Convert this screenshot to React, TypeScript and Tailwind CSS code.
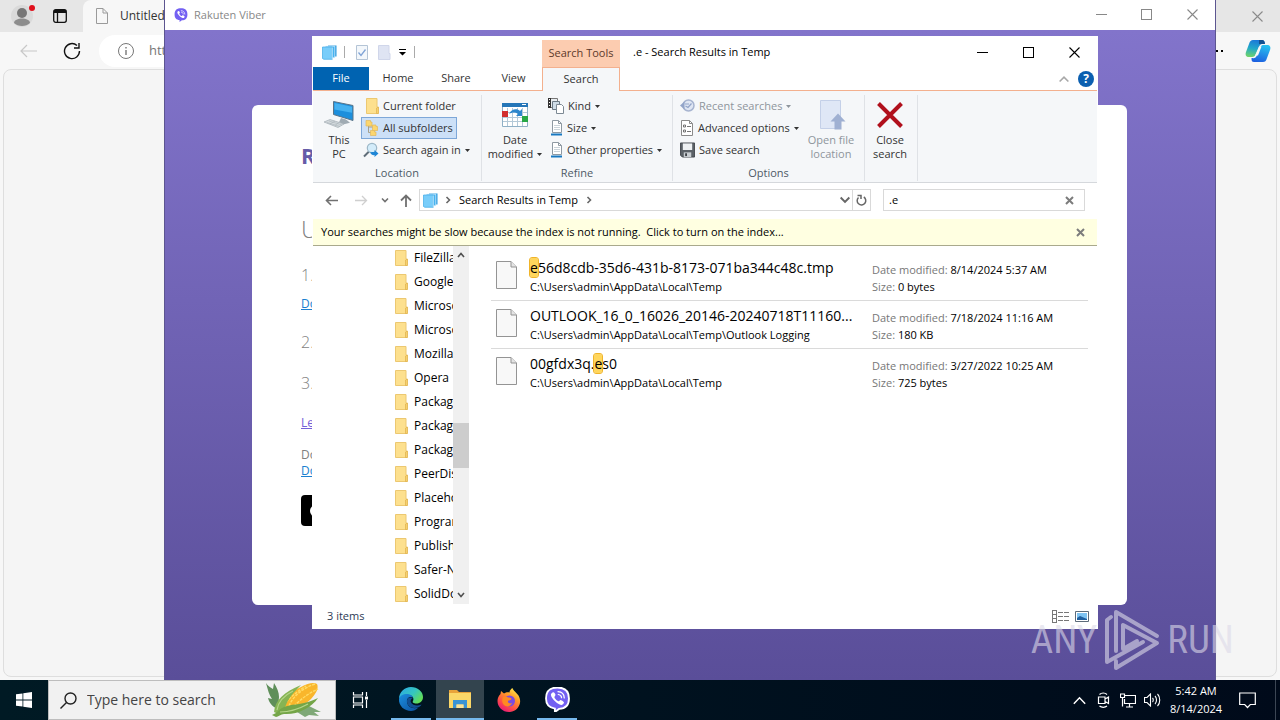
import type { ReactNode } from "react";

const FOLDERS = [
  "FileZilla",
  "Google",
  "Microsoft",
  "Microsoft",
  "Mozilla",
  "Opera",
  "Packages",
  "Packages",
  "Packages",
  "PeerDist",
  "Placeholder",
  "Programs",
  "Publishers",
  "Safer-Net",
  "SolidDocs",
];

const FILES = [
  {
    name: ["", "e", "56d8cdb-35d6-431b-8173-071ba344c48c.tmp"],
    path: "C:\\Users\\admin\\AppData\\Local\\Temp",
    modified: "8/14/2024 5:37 AM",
    size: "0 bytes",
  },
  {
    name: ["OUTLOOK_16_0_16026_20146-20240718T11160...", "", ""],
    path: "C:\\Users\\admin\\AppData\\Local\\Temp\\Outlook Logging",
    modified: "7/18/2024 11:16 AM",
    size: "180 KB",
  },
  {
    name: ["00gfdx3q.", "e", "s0"],
    path: "C:\\Users\\admin\\AppData\\Local\\Temp",
    modified: "3/27/2022 10:25 AM",
    size: "725 bytes",
  },
];

/* ---------- icons ---------- */

function Minimize() {
  return (
    <svg width="11" height="11" viewBox="0 0 11 11" stroke="currentColor" shapeRendering="crispEdges">
      <path d="M0 5.5h11" />
    </svg>
  );
}

function Maximize() {
  return (
    <svg width="11" height="11" viewBox="0 0 11 11" fill="none" stroke="currentColor" shapeRendering="crispEdges">
      <rect x="0.5" y="0.5" width="10" height="10" />
    </svg>
  );
}

function Close() {
  return (
    <svg width="11" height="11" viewBox="0 0 11 11" stroke="currentColor" strokeWidth="1.1">
      <path d="M0.5 0.5l10 10M10.5 0.5l-10 10" />
    </svg>
  );
}

function BoldClose() {
  return (
    <svg width="9" height="9" viewBox="0 0 9 9" stroke="#7c7c7c" strokeWidth="2">
      <path d="M1 1l7 7M8 1l-7 7" />
    </svg>
  );
}

function Chevron({ d, size = 8, width = 1.6 }: { d: string; size?: number; width?: number }) {
  return (
    <svg width={size} height={size} viewBox="0 0 8 8" fill="none" stroke="currentColor" strokeWidth={width}>
      <path d={d} />
    </svg>
  );
}

function Caret() {
  return (
    <svg className="inline-block shrink-0" width="5" height="3" viewBox="0 0 5 3" fill="currentColor">
      <path d="M0 0h5L2.500 3z" />
    </svg>
  );
}

function FolderIcon() {
  return (
    <svg className="shrink-0" width="13" height="16" viewBox="0 0 13 16">
      <path d="M0.500 0.500h10.500v8.500h1v6.500H0.500z" fill="#fde08e" stroke="#ecc871" />
      <path d="M10.500 10l2-1v6.500h-2z" fill="#f6d070" stroke="#dfb14c" strokeWidth="0.700" />
    </svg>
  );
}

function StackIcon() {
  return (
    <svg className="shrink-0" width="15" height="15" viewBox="0 0 15 15">
      <path d="M6 0.500h8.500v11H13L6 12z" fill="#2a9be0" />
      <path d="M3.500 1.200h9.300v11.600H3.500z" fill="#46b4f0" stroke="#e6f6ff" strokeWidth="0.700" />
      <path d="M0.500 2h9.800v12.300H1.800L0.500 13.500z" fill="#78cdfa" stroke="#3fa9e6" strokeWidth="0.700" />
      <path d="M10.300 2.500v11.500" stroke="#e6f6ff" strokeWidth="0.700" />
    </svg>
  );
}

function ThisPcIcon() {
  return (
    <svg width="32" height="30" viewBox="0 0 32 30">
      <path d="M10.500 1.500l19.500 4v15l-19.500-6z" fill="#1d8fdc" stroke="#5a7488" />
      <path d="M11.500 3l17.500 3.800v6L11.500 9.500z" fill="#45b1f0" />
      <path d="M18 18l5 1.500 4 3.200-6 1.500-5-2z" fill="#a0abb3" />
      <path d="M1 22l6-2.500 14 4.500-6 3.500z" fill="#d3d9dd" stroke="#a2acb3" strokeWidth="0.700" />
      <path d="M4 22.500l13 4M6 21l13 4M7 24l5-3M12 25.500l4-3" stroke="#a2acb3" strokeWidth="0.500" />
    </svg>
  );
}

function SubfoldersIcon() {
  return (
    <svg className="shrink-0" width="14" height="16" viewBox="0 0 14 16">
      <path d="M3.500 5v7.500h3M4 7h4" stroke="#a5a08c" fill="none" />
      <path d="M1 0.500h4.500v1.500H7v4H1z" fill="#fbd66f" stroke="#e3b95a" strokeWidth="0.700" />
      <path d="M7.500 5h3.500v1.500h1.500v4h-5z" fill="#fbd66f" stroke="#e3b95a" strokeWidth="0.700" />
      <path d="M5.500 10.500h4V12H11v3.500H5.500z" fill="#fbd66f" stroke="#e3b95a" strokeWidth="0.700" />
    </svg>
  );
}

function SearchAgainIcon() {
  return (
    <svg className="shrink-0" width="16" height="16" viewBox="0 0 16 16">
      <path d="M1 14.500l5-5" stroke="#5f6d78" strokeWidth="2" />
      <circle cx="9" cy="6" r="4.700" fill="#d3ecfa" stroke="#9db8c8" strokeWidth="1.200" />
      <path d="M7 10.500c1 2 3 3 4.500 2.500v2l4-3.500-4-3.500v2c-1.500 0-3 0-4.500.500z" fill="#1e86d6" />
    </svg>
  );
}

function CalendarIcon() {
  return (
    <svg width="26" height="26" viewBox="0 0 26 26">
      <path d="M0.500 1.500h25v23h-25z" fill="#fff" stroke="#8fb0c6" />
      <path d="M0 1h26v4H0z" fill="#2576b8" />
      <path d="M20 2.500h4" stroke="#fff" />
      <path d="M5.500 6v18M10.500 6v18M15.500 6v18M20.500 6v18M1 10.500h24M1 15.500h24M1 19.500h24" stroke="#b4c9d8" />
      <path d="M0 9h6v6H0z" fill="#d12f2f" />
      <path d="M20 14h6v6h-6z" fill="#28a745" />
      <path d="M7 12c2-5 8-6 11-3l2-2v7h-6l2-2c-2-2-6-2-9 0z" fill="#2d86cc" />
    </svg>
  );
}

function KindIcon() {
  return (
    <svg className="shrink-0" width="16" height="16" viewBox="0 0 16 16">
      <path d="M0.500 0.500h9v9h-9z" fill="#e9eef2" stroke="#777" />
      <path d="M0 0h3v10H0z" fill="#333" />
      <path d="M1 1.500h1M1 4.500h1M1 7.500h1" stroke="#fff" />
      <path d="M4.500 3.500h7v8h-7z" fill="#cfdde8" stroke="#6b7a86" />
      <path d="M8.500 6.500h5l2 2v7h-7z" fill="#fff" stroke="#7c8994" />
    </svg>
  );
}

function SizeIcon() {
  return (
    <svg className="shrink-0" width="12" height="16" viewBox="0 0 12 16">
      <path d="M1.500 0.500h6l3 3v9h-9z" fill="#fff" stroke="#8e99a2" />
      <path d="M7.500 0.500v3h3" fill="none" stroke="#8e99a2" />
      <path d="M3 5.500h6M3 7.500h6M3 9.500h6" stroke="#cbd4da" />
      <path d="M0 14.500h11" stroke="#1878c0" strokeWidth="2" />
    </svg>
  );
}

function RecentIcon() {
  return (
    <svg className="shrink-0" width="15" height="16" viewBox="0 0 15 16">
      <circle cx="8.500" cy="7.500" r="5.500" fill="#dfe6f3" stroke="#a7b4d0" strokeWidth="1.500" />
      <path d="M0 7.500l4.500-4v8z" fill="#93a5c9" />
      <path d="M5.500 8L8 9.500l3.500-4M5 6h4" fill="none" stroke="#93a5c9" strokeWidth="1.200" />
    </svg>
  );
}

function AdvancedIcon() {
  return (
    <svg className="shrink-0" width="14" height="16" viewBox="0 0 14 16">
      <path d="M1.500 0.500h8l3 3v12h-11z" fill="#fff" stroke="#8a8a8a" />
      <path d="M9.500 0.500v3h3" fill="none" stroke="#8a8a8a" />
      <path d="M3.500 5h2v2h-2zM3.500 10h2v2h-2z" fill="none" stroke="#555" strokeWidth="0.800" />
      <path d="M7 6.500h4M7 11.500h4" stroke="#777" />
    </svg>
  );
}

function FloppyIcon() {
  return (
    <svg className="shrink-0" width="15" height="16" viewBox="0 0 16 16">
      <path d="M0.500 0.500h15v15h-13l-2-2z" fill="#5b6167" stroke="#43484d" />
      <path d="M3 1h10v7H3z" fill="#eef1f3" />
      <path d="M4 10.500h8v5H4z" fill="#c8cdd1" />
      <path d="M5.500 11.500h2v3h-2z" fill="#3b4045" />
    </svg>
  );
}

function OpenLocationIcon() {
  return (
    <svg className="ml-1" width="26" height="30" viewBox="0 0 26 30">
      <path d="M0.500 0.500h20v28h-20z" fill="#dfe7f6" stroke="#c4d0e8" />
      <path d="M18 13.500l7.500 8h-4v8h-7v-8h-4z" fill="#9fb0d2" />
    </svg>
  );
}

function FileIcon() {
  return (
    <svg className="mt-2 shrink-0" width="21" height="28" viewBox="0 0 21 28">
      <path d="M0.500 0.500h14.500l5.500 5.500v21.500h-20z" fill="#f8f8f8" stroke="#949494" />
      <path d="M15 0.500v5.500h5.500" fill="#e4e4e4" stroke="#949494" />
    </svg>
  );
}

function ViberGlyph({ size, ring }: { size: number; ring?: boolean }) {
  return (
    <svg width={size} height={size} viewBox="0 0 24 24">
      <path
        d="M12 0.500c6.500 0 11 2.500 11 10.500 0 7-3.500 9.800-9.500 10L9.500 24v-3.300C4 19.800 1 17.500 1 11 1 3 5.500.500 12 .500z"
        fill="#7360f2"
        stroke={ring ? "#fff" : "none"}
        strokeWidth="1.800"
      />
      <path
        d="M7 5.500c1-.700 1.700-.300 2.300.600.800 1.100 1.100 1.700.300 2.500-1 1-.500 1.700.500 3 1 1.400 2.400 2.400 3.300 2.100.700-.300.800-1.400 2-1.100 1 .300 2.300 1.200 2.700 1.900.500 1-1 2.800-2.100 2.800-3.100 0-9.700-5.600-10.300-9.600-.100-1 .400-1.700 1.300-2.200z"
        fill="#fff"
      />
      <path d="M12.500 4.500c3.500.200 5.800 2.500 6 6M12.800 7.200c1.800.200 3 1.300 3.100 3.100" fill="none" stroke="#fff" strokeWidth="1.200" strokeLinecap="round" />
    </svg>
  );
}

function EdgeIcon() {
  return (
    <svg width="26" height="26" viewBox="0 0 26 26">
      <defs>
        <linearGradient id="edge-top" x1="0" y1="0" x2="1" y2="0.600">
          <stop offset="0" stopColor="#2aa6e8" />
          <stop offset="0.600" stopColor="#35c6c0" />
          <stop offset="1" stopColor="#62dd57" />
        </linearGradient>
        <linearGradient id="edge-low" x1="0" y1="0" x2="1" y2="1">
          <stop offset="0" stopColor="#1b8fe0" />
          <stop offset="1" stopColor="#0c4f9e" />
        </linearGradient>
      </defs>
      <path d="M1 13C1 6 6.500 1 13 1s12 4.500 12 10c0 4-3 6.500-6.500 6.500-3 0-4.500-1-3.500-2.500 1.500-3-1-6-4.500-6C6 9 2 10.500 1 13z" fill="url(#edge-top)" />
      <path d="M1 13c1-4 5-5.500 9-5 2.500.300 4.500 2 5 3.500-4-1.500-6.500 1-6 4.500.700 5 5.500 7.500 11.500 5.500C18 24 15.500 25 13 25 6.500 25 .500 20 1 13z" fill="url(#edge-low)" />
      <path d="M9 16c.700 5 5.500 7.500 12 5 1-.500 2-1.500 2.500-2.500-4 2-9 1-10.500-2-1-2 .500-4 2-4.500-4-1.500-6.500.500-6 4z" fill="#124f93" />
    </svg>
  );
}

function ExplorerIcon() {
  return (
    <svg width="24" height="22" viewBox="0 0 24 22">
      <path d="M1 2h8l2 2h12v4H1z" fill="#e9a33a" />
      <path d="M1 5h22v15H1z" fill="#fbd768" />
      <path d="M5 12h14v8h-3.500v-3.500h-7V20H5z" fill="#3a94d6" />
      <path d="M8.500 16.500h7V20h-7z" fill="#fbe39a" />
    </svg>
  );
}

function FirefoxIcon() {
  return (
    <svg width="24" height="24" viewBox="0 0 24 24">
      <defs>
        <linearGradient id="fox" x1="0.800" y1="0" x2="0.200" y2="1">
          <stop offset="0" stopColor="#fff04f" />
          <stop offset="0.350" stopColor="#ff9a28" />
          <stop offset="0.700" stopColor="#ff4a4a" />
          <stop offset="1" stopColor="#e3127f" />
        </linearGradient>
      </defs>
      <path d="M3.500 6L4 3l3 2.500C9 4 11 4 12.500 4.500 12.500 2.500 14 1 15.500 0c.500 2.500 4 4.500 6 7.500C24 12 23.500 16 21 19.500 18.500 23 14.500 24 12 24 5.500 24 .500 19 .500 13c0-3 1-5 3-7z" fill="url(#fox)" />
      <circle cx="12.500" cy="13" r="5.500" fill="#7a4be0" />
      <path d="M6 9c2-1 4-.500 5 .500 2 0 3.500.500 3.500 1.500s-2 1-3.500 2c-.500 2 2 3 4 2-1 3-4 4-6.500 3C5 16.500 4.500 12 6 9z" fill="#ff8a22" />
    </svg>
  );
}

function CornIcon() {
  return (
    <svg className="ml-auto mr-3" width="58" height="36" viewBox="0 0 58 36">
      <path d="M1 1c2 3 4 4 7 6l1-6c3 5 5 9 5 14l-1 12C7 25 4 20 3 16l4 1C4 13 3 8 1 1z" fill="#5f8f5a" />
      <path d="M20 30l12-4 10-3 14 7-7 0 5 4-10-1-4 2-8-5z" fill="#7fa877" />
      <path d="M17 25C21 14 29 8 36 5 43 1 49 0 52 2c2 4-1 10-6 15-7 7-19 12-29 8z" fill="#f9b62b" />
      <path d="M24 24C28 14 38 6 50 2M29 24C36 17 44 11 53 7M21 20c6-6 12-11 20-16" stroke="#ffdc66" strokeWidth="1.400" strokeDasharray="3 1" fill="none" />
      <path d="M9 30C10 18 19 10 36 3c-8 8-13 14-15 20-1 3-4 6-8 9z" fill="#86b454" />
      <path d="M11 31c6-7 14-8 23-9 7-1 13-3 19-6-7 10-21 17-34 16-3 0-6 3-8 3l-4-2z" fill="#74a548" />
      <path d="M12 28c1-7 6-14 16-19M15 30c10 0 19-3 28-8" fill="none" stroke="#b5d58a" strokeWidth="1.200" />
    </svg>
  );
}

function CopilotIcon() {
  return (
    <svg width="26" height="24" viewBox="0 0 26 24">
      <defs>
        <linearGradient id="cp-a" x1="0.500" y1="0" x2="0.300" y2="1">
          <stop offset="0" stopColor="#1b78d8" />
          <stop offset="0.500" stopColor="#22a9c9" />
          <stop offset="1" stopColor="#6fd36b" />
        </linearGradient>
        <linearGradient id="cp-b" x1="0.600" y1="0" x2="0.300" y2="1">
          <stop offset="0" stopColor="#27c0ef" />
          <stop offset="1" stopColor="#1c5fe0" />
        </linearGradient>
      </defs>
      <path d="M8 1h9c2 0 2.500 1 3 4-3-.500-5 0-6 3l-3 7c-1 2-2 3-4 3H4c-3 0-4-2-3-5l3-8c1-3 2-4 4-4z" fill="url(#cp-a)" />
      <path d="M14 1h3c2 0 2.500 1 3 4h-6z" fill="#14518f" />
      <path d="M18 23H9c-2 0-2.500-1-2.500-4 3 .500 4.500 0 5.500-3l3-7c1-2.500 2-3 4-3h3c3 0 4 2 3 5l-3 8c-1 3-2 4-4 4z" fill="url(#cp-b)" />
      <path d="M14 7.500h2.500l-3.500 9h-3z" fill="#f7f7f7" />
    </svg>
  );
}

/* ---------- browser behind everything ---------- */

function BrowserWindow() {
  return (
    <section className="absolute inset-0 flex flex-col bg-[#f7f7f7]">
      <div className="flex h-8 items-stretch bg-[#e6e6e6]">
        <div className="flex w-[83px] items-center gap-5 pl-[11px]">
          <button aria-label="Profile" className="relative">
            <svg width="22" height="22" viewBox="0 0 22 22">
              <circle cx="11" cy="11" r="11" fill="#dadada" />
              <circle cx="11" cy="8" r="5" fill="#777" />
              <path d="M3 18c0-6 16-6 16 0-4 4-12 4-16 0z" fill="#8d8d8d" />
            </svg>
            <span className="absolute -right-0.5 top-0 size-[6px] rounded-full bg-[#e0101c]" />
          </button>
          <button aria-label="Tab actions">
            <svg width="14" height="14" viewBox="0 0 14 14" fill="none" stroke="#111" strokeWidth="1.300">
              <rect x="0.700" y="0.700" width="12.600" height="12.600" rx="2" />
              <path d="M1 2.500h12" strokeWidth="3" />
              <path d="M4.500 3v10" />
            </svg>
          </button>
        </div>
        <div className="flex w-60 items-center gap-3 rounded-t-lg bg-[#f7f7f7] pl-[13px] text-xs text-[#333]">
          <svg width="12" height="16" viewBox="0 0 12 16" fill="none" stroke="#9a9a9a">
            <path d="M0.500 0.500h6.500l4.500 4.500v10.500H0.500zM7 0.500v4.500h4.500" />
          </svg>
          <span>Untitled</span>
        </div>
        <button aria-label="Close browser" className="ml-auto flex w-[46px] items-center justify-center text-[#8a8a8a]">
          <Close />
        </button>
      </div>
      <div className="flex h-[37px] items-center">
        <button aria-label="Back" className="ml-5 text-[#c8c8c8]">
          <svg width="17" height="14" viewBox="0 0 17 14" fill="none" stroke="currentColor" strokeWidth="1.200">
            <path d="M17 7H1M7 1L1 7l6 6" />
          </svg>
        </button>
        <button aria-label="Refresh" className="ml-[26px]">
          <svg width="18" height="18" viewBox="0 0 18 18" fill="none" stroke="#111" strokeWidth="1.400">
            <path d="M16.500 9A7.500 7.500 0 1 1 14 3.500M16 1v5h-5" />
          </svg>
        </button>
        <div className="ml-[18px] flex h-8 w-[300px] items-center gap-[15px] rounded-full bg-white pl-[19px] text-[13px] text-[#777]">
          <svg width="16" height="16" viewBox="0 0 16 16" fill="none" stroke="#777">
            <circle cx="8" cy="8" r="7.500" />
            <path d="M8 7v5M8 4v1.500" strokeWidth="1.400" />
          </svg>
          <span>http</span>
        </div>
        <div className="ml-auto flex items-center gap-[22px] pr-[9px]">
          <span className="flex gap-[3px]">
            <i className="size-[2px] bg-black" />
            <i className="size-[2px] bg-black" />
            <i className="size-[2px] bg-black" />
          </span>
          <CopilotIcon />
        </div>
      </div>
      <div className="mx-[3px] mb-[3px] flex-1 rounded-lg border border-[#dedede] bg-[#f5f5f5]" />
    </section>
  );
}

/* ---------- Viber ---------- */

function ViberWindow() {
  return (
    <section className="absolute inset-y-0 left-[164px] right-[64px] flex flex-col border-x border-[#5c5590] bg-white">
      <header className="flex h-[30px] shrink-0 items-center text-[11px] text-[#888]">
        <span className="ml-[9px] mr-[6px]">
          <ViberGlyph size={14} />
        </span>
        <span>Rakuten Viber</span>
        <div className="ml-auto flex h-full pb-px">
          <button aria-label="Minimize Viber" className="flex w-[46px] items-center justify-center"><Minimize /></button>
          <button aria-label="Maximize Viber" className="flex w-[45px] items-center justify-center"><Maximize /></button>
          <button aria-label="Close Viber" className="flex w-[46px] items-center justify-center"><Close /></button>
        </div>
      </header>
      <div className="flex flex-1 flex-col bg-linear-to-b from-[#8274cb] to-[#5a4e99] pb-[75px] pl-[87px] pr-[88px] pt-[75px]">
        <div className="flex-1 rounded-md bg-white pl-[49px] pr-12 pt-[34px] text-[#7f7f7f]">
          <div className="text-[22px] font-bold leading-8 text-[#665ca8]">R</div>
          <div className="mt-[42px] text-2xl font-light leading-8">U</div>
          <div className="mt-[18px] text-base font-light leading-6">1.</div>
          <a href="#download" className="mt-[7px] block text-xs leading-5 text-[#1b7fd0] underline">Do</a>
          <div className="mt-4 text-base font-light leading-6">2.</div>
          <div className="mt-[17px] text-base font-light leading-6">3.</div>
          <a href="#learn" className="mt-[18px] block text-xs leading-5 text-[#7360d8] underline">Le</a>
          <div className="mt-3 text-xs leading-5">Do</div>
          <a href="#get" className="block text-xs leading-3 text-[#1b7fd0] underline">Do</a>
          <button aria-label="Download from the store" className="mt-[18px] flex h-[31px] w-28 items-center rounded bg-black pl-[9px]">
            <i className="size-3 rounded-full bg-white" />
          </button>
        </div>
      </div>
    </section>
  );
}

/* ---------- File explorer ---------- */

function RibbonGroup({ label, className, children }: { label: string; className: string; children: ReactNode }) {
  return (
    <div className={`flex flex-col border-r border-[#dfe2e6] ${className}`}>
      <div className="flex h-[66px]">{children}</div>
      <div className="pt-[3px] text-center leading-[18px] text-[#4d5a66]">{label}</div>
    </div>
  );
}

function BigButton({ icon, top, bottom, className, caret }: { icon: ReactNode; top: string; bottom: string; className: string; caret?: boolean }) {
  return (
    <button className={`flex shrink-0 flex-col items-center whitespace-nowrap leading-[14px] ${className}`}>
      <span className="mb-[3px] flex h-[35px] items-center justify-center pt-1">{icon}</span>
      <span>{top}</span>
      <span className="flex items-center gap-1">
        {bottom}
        {caret && <Caret />}
      </span>
    </button>
  );
}

function SmallButton({ icon, label, caret, className = "" }: { icon: ReactNode; label: string; caret?: boolean; className?: string }) {
  return (
    <button className={`flex h-[22px] items-center gap-1 whitespace-nowrap ${className}`}>
      {icon}
      <span>{label}</span>
      {caret && <Caret />}
    </button>
  );
}

function Ribbon() {
  return (
    <div className="flex h-[92px] border-b border-[#d5d8dc] bg-[#f5f7f9] pb-px pt-1 text-[#333]">
      <RibbonGroup label="Location" className="w-[169px]">
        <BigButton icon={<ThisPcIcon />} top="This" bottom="PC" className="ml-1 w-11" />
        <div className="flex flex-col items-start">
          <SmallButton icon={<FolderIcon />} label="Current folder" className="pl-[5px]" />
          <SmallButton icon={<SubfoldersIcon />} label="All subfolders" className="border border-[#7da7d8] bg-[#cce0f7] px-[3px]" />
          <SmallButton icon={<SearchAgainIcon />} label="Search again in" caret className="pl-[2px]" />
        </div>
      </RibbonGroup>
      <RibbonGroup label="Refine" className="w-[191px]">
        <BigButton icon={<CalendarIcon />} top="Date" bottom="modified" caret className="w-[66px]" />
        <div className="flex flex-col items-start">
          <SmallButton icon={<KindIcon />} label="Kind" caret />
          <SmallButton icon={<SizeIcon />} label="Size" caret className="pl-[3px]" />
          <SmallButton icon={<SizeIcon />} label="Other properties" caret className="pl-[3px]" />
        </div>
      </RibbonGroup>
      <RibbonGroup label="Options" className="w-[192px]">
        <div className="flex w-[130px] shrink-0 flex-col items-start pl-[7px]">
          <SmallButton icon={<RecentIcon />} label="Recent searches" caret className="text-[#8e959c]" />
          <SmallButton icon={<AdvancedIcon />} label="Advanced options" caret />
          <SmallButton icon={<FloppyIcon />} label="Save search" />
        </div>
        <BigButton icon={<OpenLocationIcon />} top="Open file" bottom="location" className="w-14 text-[#8e959c]" />
      </RibbonGroup>
      <RibbonGroup label="" className="w-[53px]">
        <BigButton
          icon={
            <svg width="26" height="26" viewBox="0 0 26 26" stroke="#b0101c" strokeWidth="4">
              <path d="M1.500 1.500l23 23M24.500 1.500l-23 23" />
            </svg>
          }
          top="Close"
          bottom="search"
          className="w-[50px]"
        />
      </RibbonGroup>
    </div>
  );
}

function AddressRow() {
  return (
    <div className="flex h-9 items-center pb-[2px] pr-3">
      <div className="flex w-[106px] items-center text-[#707070]">
        <button aria-label="Go back" className="ml-3">
          <svg width="13" height="11" viewBox="0 0 13 11" fill="none" stroke="currentColor" strokeWidth="1.600">
            <path d="M13 5.500H1.500M6 1L1.500 5.500 6 10" />
          </svg>
        </button>
        <button aria-label="Go forward" className="ml-[17px] text-[#cfcfcf]">
          <svg width="13" height="11" viewBox="0 0 13 11" fill="none" stroke="currentColor" strokeWidth="1.300">
            <path d="M0 5.500h11.500M7 1l4.500 4.500L7 10" />
          </svg>
        </button>
        <button aria-label="Recent locations" className="ml-[13px]"><Chevron d="M1 2.500l3 3 3-3" /></button>
        <button aria-label="Up" className="ml-[11px]">
          <svg width="12" height="13" viewBox="0 0 12 13" fill="none" stroke="currentColor" strokeWidth="1.800">
            <path d="M6 13V1.500M1 6.500l5-5 5 5" />
          </svg>
        </button>
      </div>
      <div className="flex h-[22px] flex-1 items-center border border-[#d9d9d9] text-[#666]">
        <span className="ml-[3px] mr-[6px]"><StackIcon /></span>
        <Chevron d="M2.500 1l3 3-3 3" />
        <span className="ml-[7px] mr-[7px] text-black">Search Results in Temp</span>
        <Chevron d="M2.500 1l3 3-3 3" />
        <button aria-label="Previous locations" className="ml-auto mr-[2px]"><Chevron d="M0.500 2l3.500 3.500L7.500 2" size={10} /></button>
        <button aria-label="Refresh results" className="flex h-full w-[18px] items-center justify-center border-l border-[#d9d9d9]">
          <svg width="11" height="12" viewBox="0 0 11 12" fill="none" stroke="currentColor" strokeWidth="1.500">
            <path d="M7.800 3A4.300 4.300 0 1 1 2.500 3.500M1.500 1.500h3.500v3.500" />
          </svg>
        </button>
      </div>
      <div className="ml-3 flex h-[22px] w-[202px] items-center border border-[#d9d9d9] pl-[5px] pr-[10px]">
        <input aria-label="Search" defaultValue=".e" className="min-w-0 flex-1 bg-transparent text-black outline-none" />
        <button aria-label="Clear search"><BoldClose /></button>
      </div>
    </div>
  );
}

function NavPane() {
  return (
    <nav className="flex w-[156px] shrink-0">
      <ul className="flex-1 overflow-hidden text-xs">
        {FOLDERS.map((name, i) => (
          <li key={i} className="flex h-6 items-center gap-[6px] whitespace-nowrap pl-[82px]">
            <FolderIcon />
            {name}
          </li>
        ))}
      </ul>
      <div className="flex w-4 flex-col items-center bg-[#f0f0f0] py-[5px] text-[#505050]">
        <Chevron d="M1 6l3-3.500L7 6" />
        <div className="mt-[164px] h-[45px] w-full bg-[#cdcdcd]" />
        <span className="mt-auto"><Chevron d="M1 2l3 3.500L7 2" /></span>
      </div>
    </nav>
  );
}

function FileList() {
  return (
    <ul className="min-w-0 flex-1 pl-[22px] pr-[9px] pt-[7px]">
      {FILES.map((file) => (
        <li key={file.modified} className="flex h-12 border-b border-[#dadada] pl-[5px] last:border-0">
          <FileIcon />
          <div className="ml-[13px] w-[342px] shrink-0 whitespace-nowrap pt-[3px]">
            <div className="text-sm leading-6">
              {file.name[0]}
              {file.name[1] && (
                <mark className="rounded-xs bg-[#ffd65c] text-black outline outline-[#f0b429]">{file.name[1]}</mark>
              )}
              {file.name[2]}
            </div>
            <div className="leading-[14px]">{file.path}</div>
          </div>
          <div className="whitespace-nowrap pt-2 leading-[17px]">
            <div>
              <span className="text-[#777]">Date modified: </span>
              {file.modified}
            </div>
            <div>
              <span className="text-[#777]">Size: </span>
              {file.size}
            </div>
          </div>
        </li>
      ))}
    </ul>
  );
}

function ExplorerWindow() {
  return (
    <section className="absolute left-[312px] top-9 flex h-[593px] w-[786px] flex-col border border-white bg-white text-[11px] text-black">
      <header className="flex h-[30px] shrink-0">
        <div className="flex w-[229px] items-center pl-[9px]">
          <StackIcon />
          <i className="ml-[7px] h-3 w-px bg-[#aaa]" />
          <svg className="ml-[11px]" width="12" height="15" viewBox="0 0 12 15" fill="#f3f7fb" stroke="#b4c4d6">
            <path d="M0.500 0.500h11v14H0.500z" />
            <path d="M2.500 7.500l2.500 3 4.500-6" fill="none" stroke="#7fa3d6" strokeWidth="1.300" />
          </svg>
          <svg className="ml-[10px]" width="13" height="15" viewBox="0 0 13 15">
            <path d="M0.500 0.500h10.500v8h1v6H0.500z" fill="#dfe4f3" stroke="#d0d6ea" />
          </svg>
          <svg className="ml-2" width="7" height="7" viewBox="0 0 7 7">
            <path d="M0 0h7v1H0zM0 3h7L3.500 6.500z" />
          </svg>
          <i className="ml-2 h-3 w-px bg-[#aaa]" />
        </div>
        <div className="mt-[3px] flex w-[78px] items-center justify-center bg-[#fcccb0] text-[#5c3a2a]">Search Tools</div>
        <h1 className="flex flex-1 items-center pl-[13px]">.e - Search Results in Temp</h1>
        <button aria-label="Minimize" className="flex w-[46px] items-center justify-center"><Minimize /></button>
        <button aria-label="Maximize" className="flex w-[46px] items-center justify-center"><Maximize /></button>
        <button aria-label="Close" className="flex w-[46px] items-center justify-center"><Close /></button>
      </header>
      <div className="flex h-6 shrink-0 text-[#333]">
        <button className="w-14 border-b border-[#f3b08e] bg-[#0063b1] text-white">File</button>
        <button className="w-[58px] border-b border-[#f3b08e]">Home</button>
        <button className="w-[58px] border-b border-[#f3b08e]">Share</button>
        <button className="w-[57px] border-b border-[#f3b08e]">View</button>
        <button className="w-[78px] border-x border-t border-[#f3b08e] bg-[#f5f7f9]">Search</button>
        <div className="flex flex-1 items-center justify-end gap-[9px] border-b border-[#f3b08e] pr-[3px]">
          <button aria-label="Collapse ribbon" className="text-[#a8a8a8]"><Chevron d="M0.500 6L4 2.500 7.500 6" size={10} width={1.3} /></button>
          <button aria-label="Help" className="size-4 rounded-full bg-[#0b5fb0] text-center text-xs font-bold leading-4 text-white">?</button>
        </div>
      </div>
      <Ribbon />
      <AddressRow />
      <div className="flex h-[27px] shrink-0 items-center border-b border-[#a9a98c] bg-[#ffffe1] pl-2 pr-3">
        <button className="whitespace-pre">{"Your searches might be slow because the index is not running.  Click to turn on the index..."}</button>
        <button aria-label="Dismiss message" className="ml-auto"><BoldClose /></button>
      </div>
      <div className="flex min-h-0 flex-1 overflow-hidden">
        <NavPane />
        <FileList />
      </div>
      <footer className="flex h-6 shrink-0 items-center pl-[14px] pr-2 text-[#2c3a55]">
        <span>3 items</span>
        <button aria-label="Details view" className="ml-auto">
          <svg width="17" height="13" viewBox="0 0 17 13" fill="none" stroke="#777" shapeRendering="crispEdges">
            <path d="M0.500 0.500h4v4h-4zM0.500 4.500h4v4h-4zM0.500 8.500h4v4h-4z" />
            <path d="M6 2.500h11M6 6.500h11M6 10.500h11" strokeDasharray="5 1" />
          </svg>
        </button>
        <button aria-label="Large icons view" className="ml-[6px]">
          <svg width="14" height="11" viewBox="0 0 14 11">
            <path d="M0.500 0.500h13v10H0.500z" fill="#fff" stroke="#5c6b7a" />
            <path d="M2 2h10v7H2z" fill="#7ec3f2" />
            <path d="M2 7l3-2 7 3v1H2z" fill="#1f5f9f" />
          </svg>
        </button>
      </footer>
    </section>
  );
}

function Watermark() {
  return (
    <div className="pointer-events-none absolute bottom-2 right-[46px] flex h-16 items-center gap-[7px] font-['Roboto_Condensed','Roboto',sans-serif] text-[39px] leading-none text-[#dcdae8]/60">
      <span>ANY</span>
      <svg width="56" height="62" viewBox="0 0 56 62" fill="none" stroke="currentColor" strokeWidth="4" strokeLinejoin="round" strokeLinecap="round">
        <path d="M12 42V3l41 24M7 8L3 11v42l36-20M12 52v7l41-25-34-18v24l14-8" />
      </svg>
      <span>RUN</span>
    </div>
  );
}

/* ---------- taskbar ---------- */

function Taskbar() {
  return (
    <footer className="flex h-10 shrink-0 items-stretch bg-linear-to-r from-[#001a24] to-[#000a1a] text-white">
      <button aria-label="Start" className="flex w-12 items-center justify-center">
        <svg width="16" height="16" viewBox="0 0 16 16" fill="#fff">
          <path d="M0 2.300L6.500 1.400v6.200H0zM7.300 1.300L16 0v7.600H7.300zM0 8.400h6.500v6.200L0 13.700zM7.300 8.400H16V16l-8.700-1.300z" />
        </svg>
      </button>
      <label className="flex w-72 items-center border border-[#bdbdbd] bg-[#f1f1f1] pl-[11px]">
        <svg className="shrink-0" width="17" height="17" viewBox="0 0 17 17" fill="none" stroke="#222" strokeWidth="1.400">
          <circle cx="10.500" cy="6.500" r="5.500" />
          <path d="M6.500 10.500l-6 6" />
        </svg>
        <input aria-label="Type here to search" placeholder="Type here to search" className="ml-[10px] w-[150px] bg-transparent text-sm outline-none placeholder:text-[#444]" />
        <CornIcon />
      </label>
      <button aria-label="Task view" className="flex w-12 items-center justify-center">
        <svg width="17" height="16" viewBox="0 0 17 16" fill="none" stroke="#fff" strokeWidth="1.200">
          <path d="M1.500 0v3h9V0M1.500 16v-3h9v3M1.500 5h9v6h-9zM14.500 0v4M14.500 8v8" />
          <path d="M13 4.500h3v3h-3z" fill="#fff" stroke="none" />
        </svg>
      </button>
      <button aria-label="Microsoft Edge" className="ml-[7px] mr-[5px] flex w-10 items-center justify-center border-b-2 border-[#76b9ed]"><EdgeIcon /></button>
      <button aria-label="File Explorer" className="flex w-12 items-center justify-center border-b-2 border-[#76b9ed] bg-[#33444e]"><ExplorerIcon /></button>
      <button aria-label="Firefox" className="flex w-[50px] items-center justify-center"><FirefoxIcon /></button>
      <button aria-label="Viber" className="ml-[3px] flex w-10 items-center justify-center border-b-2 border-[#76b9ed]"><ViberGlyph size={25} ring /></button>
      <div className="ml-auto flex items-center">
        <button aria-label="Show hidden icons" className="mr-[11px]"><Chevron d="M0.500 6L4 2.300 7.500 6" size={13} width={0.9} /></button>
        <button aria-label="Meet now" className="mr-[10px]">
          <svg width="13" height="16" viewBox="0 0 13 16" fill="none" stroke="#fff" strokeWidth="1.200">
            <path d="M1.500 5h6.500v6.500H1.500zM8 7l3.500-2v6.500L8 9.500M2.500 2.500c2-2 5.500-2 7.500 0M2.500 14c2 1.700 5.500 1.700 7.500 0" />
          </svg>
        </button>
        <button aria-label="Network" className="mr-2">
          <svg width="16" height="15" viewBox="0 0 16 15" fill="none" stroke="#fff" strokeWidth="1.200">
            <path d="M5 2.500h10.500v8H4.500V6M9.500 10.500v3M6 14h7M0.500 1h4v3.500h-4zM2.500 4.500v9" />
          </svg>
        </button>
        <button aria-label="Volume" className="mr-[10px]">
          <svg width="17" height="14" viewBox="0 0 17 14" fill="none" stroke="#fff" strokeWidth="1.100">
            <path d="M0.500 4.500h2.500L6.500 1v12L3 9.500H.500zM8.500 5c1 1 1 3 0 4M11 3c2 2 2 6 0 8M13.500 1c3 3 3 9 0 12" />
          </svg>
        </button>
        <div className="flex w-[50px] flex-col items-center whitespace-nowrap text-[11px] leading-[18px]">
          <div>5:42 AM</div>
          <div>8/14/2024</div>
        </div>
        <button aria-label="Notifications" className="ml-[18px] mr-[19px]">
          <svg width="17" height="17" viewBox="0 0 17 17" fill="none" stroke="#fff" strokeWidth="1.200">
            <path d="M0.700 1h15.600v11.500h-5L8.500 15.500l-2.800-3h-5z" />
          </svg>
        </button>
        <i className="mr-1 h-10 w-px bg-[#3c4654]" />
      </div>
    </footer>
  );
}

export default function App() {
  return (
    <div className="flex h-screen w-full flex-col overflow-hidden font-['Open_Sans','Noto_Sans',sans-serif]">
      <main className="relative min-h-0 flex-1 overflow-hidden">
        <BrowserWindow />
        <ViberWindow />
        <ExplorerWindow />
        <Watermark />
      </main>
      <Taskbar />
    </div>
  );
}
